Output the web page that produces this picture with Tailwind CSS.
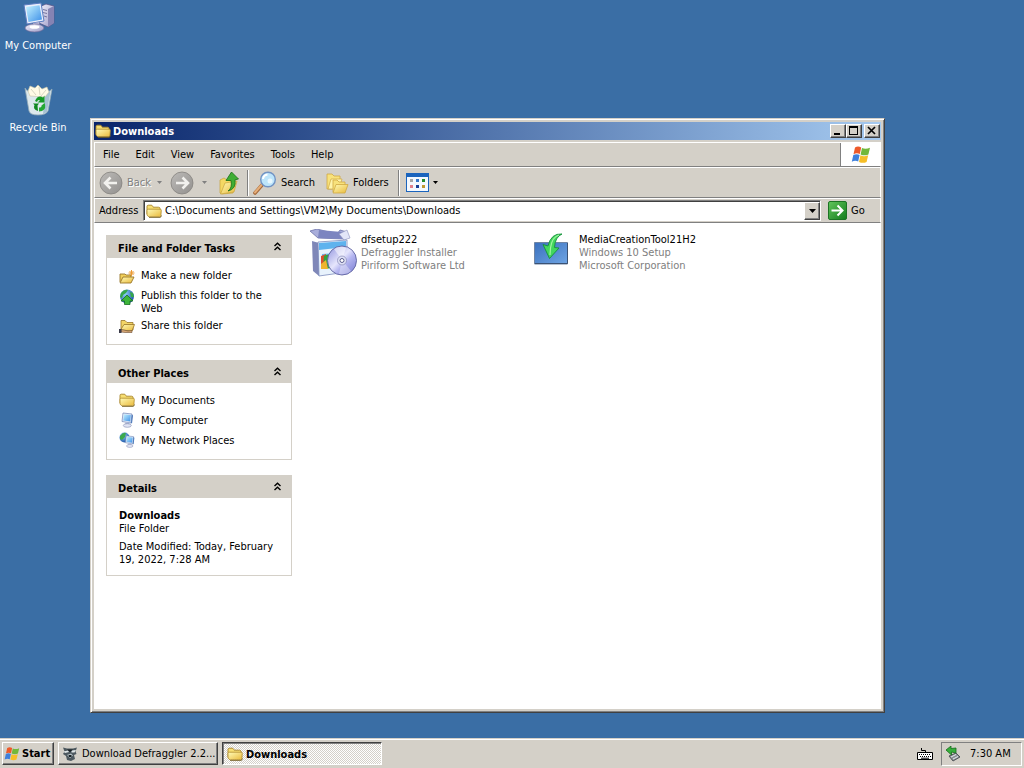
<!DOCTYPE html>
<html lang="en">
<head>
    <meta charset="UTF-8">
    <meta name="viewport" content="width=device-width, initial-scale=1.0">
    <script src="https://cdn.jsdelivr.net/npm/@tailwindcss/browser@4"></script>
    <title>Downloads</title>
</head>
<body class="flex min-h-screen flex-col bg-[#3a6ea5] font-['DejaVu_Sans_Condensed','DejaVu_Sans',sans-serif] text-[11px] leading-[13px] text-black">
    <!-- Shared icons -->
    <svg class="absolute h-0 w-0" aria-hidden="true">
        <defs>
            <linearGradient id="gFolder" x1="0" y1="0" x2="1" y2="1"><stop offset="0" stop-color="#fffbb8"/><stop offset="1" stop-color="#e9b93a"/></linearGradient>
            <linearGradient id="gScreen" x1="0" y1="0" x2="1" y2="1"><stop offset="0" stop-color="#c4f3ff"/><stop offset="1" stop-color="#3c8fe8"/></linearGradient>
            <linearGradient id="gCase" x1="0" y1="0" x2="1" y2="1"><stop offset="0" stop-color="#f4f3fd"/><stop offset="1" stop-color="#9a98c4"/></linearGradient>
            <linearGradient id="gGrey" x1="0" y1="0" x2="1" y2="1"><stop offset="0" stop-color="#bdbbb8"/><stop offset="1" stop-color="#92908e"/></linearGradient>
            <linearGradient id="gGreen" x1="0" y1="0" x2="1" y2="1"><stop offset="0" stop-color="#62c65c"/><stop offset="1" stop-color="#137c1c"/></linearGradient>
            <radialGradient id="gGlobe" cx=".35" cy=".3" r=".8"><stop offset="0" stop-color="#8fd0ff"/><stop offset="1" stop-color="#12489c"/></radialGradient>
            <linearGradient id="gDisc" x1="0" y1="0" x2="1" y2="1"><stop offset="0" stop-color="#8d90dd"/><stop offset=".45" stop-color="#e6e6fc"/><stop offset=".6" stop-color="#b5b6f0"/><stop offset="1" stop-color="#7478cf"/></linearGradient>
            <linearGradient id="gTile" x1="0" y1="0" x2="1" y2="1"><stop offset="0" stop-color="#3a70bd"/><stop offset="1" stop-color="#6fa5e4"/></linearGradient>
        </defs>
        <symbol id="folder" viewBox="0 0 16 16">
            <path d="M1 11V3.500Q1 2.200 2.200 2.200H5.200Q6.200 2.200 6.700 3.200L7.200 4.200H12.500Q14 4.200 14 5.500V12" fill="#f7de72" stroke="#a8842a" stroke-width=".9"/>
            <path d="M1 12V7.500Q1 6.200 2.300 6.200H14.200Q15.400 6.200 15.300 7.400L14.900 12.500Q14.800 13.800 13.500 13.800H3.500Q2 13.800 1 12Z" fill="url(#gFolder)" stroke="#b08c2e" stroke-width=".8"/>
            <path d="M3 14.400H14Q15.300 14.200 15.500 12.500" fill="none" stroke="#6f5a20" stroke-width=".8"/>
        </symbol>
        <symbol id="pc" viewBox="0 0 16 16">
            <path d="M4 1 13 2 12 11 3 9.500Z" fill="#e8ecf8" stroke="#6b83b5" stroke-width=".7"/>
            <path d="M4.900 2.200 11.900 3 11.200 9.600 4.200 8.500Z" fill="url(#gScreen)"/>
            <path d="M12.800 2.500 14 3.500 13 11.500 12 11Z" fill="#4976b8"/>
            <path d="M6.500 10.200 10.500 10.800 10.200 12.500H6Z" fill="#b4bcd8"/>
            <ellipse cx="8.300" cy="13.500" rx="4" ry="1.800" fill="#e2e5f4" stroke="#7f89b0" stroke-width=".6"/>
        </symbol>
        <symbol id="flag" viewBox="0 0 20 18">
            <path d="M4 1.500Q7 -.3 10.200 1.500L8.800 8Q5.700 6.500 2.500 8.200Z" fill="#ee5a2a"/>
            <path d="M11 2Q14.500 3.800 19 1.700L17.400 8.400Q13.500 10.200 9.600 8.400Z" fill="#72b83a"/>
            <path d="M2.300 9.100Q5.500 7.300 8.600 8.900L7.200 15.600Q4.200 14 .8 15.800Z" fill="#3f80dc"/>
            <path d="M9.400 9.300Q13 11 17.200 9.300L15.600 16Q12 17.700 8 16Z" fill="#f6be27"/>
        </symbol>
        <symbol id="chevrons" viewBox="0 0 9 9">
            <path d="M1.500 4 4.500 1.200 7.500 4M1.500 8 4.500 5.200 7.500 8" fill="none" stroke="#000" stroke-width="1.400"/>
        </symbol>
        <symbol id="down" viewBox="0 0 7 4"><path d="M0 0H7L3.500 4Z" fill="currentColor"/></symbol>
    </svg>

    <main class="relative flex-1">
        <!-- Desktop icons -->
        <div class="absolute top-px left-0 w-[76px] text-center text-white">
            <button class="flex h-[82px] w-full flex-col items-center gap-1">
                <svg class="h-[34px] w-[34px]" viewBox="0 0 34 34">
                    <path d="M18 6 25 3 33 5V22L27 26 18 22Z" fill="url(#gCase)" stroke="#57558a" stroke-width=".8"/>
                    <path d="M27 8 33 5V22L27 26Z" fill="#8583b3"/>
                    <path d="M22 8.500 26 9.500M22 11.500 26 12.500M23 15 26 16" stroke="#77759f"/>
                    <path d="M3 4 20 2 23 20 6 23Z" fill="#e9eefb" stroke="#5a7cc0" stroke-width="1"/>
                    <path d="M5 6 18.500 4.300 21 18.500 7.500 21Z" fill="url(#gScreen)"/>
                    <path d="M12 22 18 21 19 26H12Z" fill="#b6b6d8"/>
                    <ellipse cx="13.500" cy="27" rx="9.500" ry="4" fill="url(#gCase)" stroke="#6b6998" stroke-width=".7"/>
                    <ellipse cx="13.500" cy="26" rx="5" ry="1.800" fill="#fff"/>
                </svg>
                <span>My Computer</span>
            </button>
            <button class="flex w-full flex-col items-center gap-1">
                <svg class="h-[34px] w-[34px]" viewBox="0 0 34 34">
                    <path d="M4 5 8 28Q9 32 17 32T27 28L31 6Q28 10 17 10T4 5Z" fill="#dce8ec" stroke="#93abb8" stroke-width=".8"/>
                    <path d="M24 10 29.500 8 26 29 22 31Z" fill="#8fb0c8" opacity=".7"/>
                    <path d="M7 8 9 3 14 5 17 2 21 6 26 4 28 9 24 14 9 13Z" fill="#fffbe6" stroke="#c5c3a8" stroke-width=".6"/>
                    <path d="M10 6 15 12M18 4 19 12M25 7 20 13" stroke="#d8d6c0"/>
                    <path d="M14 18Q17 11.500 22 14.500L23.500 12.500V19.500H16.500L19 17.500Q17 16 16 19Z" fill="#169a26"/>
                    <path d="M23.500 20Q26 25 21 28L18 28.500V24.500Q20.800 24.500 20.500 22.500Z" fill="#24a834"/>
                    <path d="M12 20.500H18L16.500 22.500 17 28Q11.500 26.500 13.500 22Z" fill="#0f8820"/>
                </svg>
                <span>Recycle Bin</span>
            </button>
        </div>

        <!-- Explorer window -->
        <section class="absolute top-[118px] left-[90px] flex h-[595px] w-[795px] flex-col border border-t-[#d4d0c8] border-r-[#404040] border-b-[#404040] border-l-[#d4d0c8] bg-[#d4d0c8] p-[3px] shadow-[inset_1px_1px_0_#fff,inset_-1px_-1px_0_#808080]">
            <header class="flex h-[18px] shrink-0 items-center bg-linear-to-r from-[#0a246a] to-[#a6caf0] pr-px pl-px text-white">
                <svg class="h-4 w-4"><use href="#folder"/></svg>
                <h1 class="ml-[2px] flex-1 font-bold">Downloads</h1>
                <button aria-label="Minimize" class="h-[14px] w-4 border border-t-white border-r-[#404040] border-b-[#404040] border-l-white bg-[#d4d0c8] shadow-[inset_-1px_-1px_0_#808080]"><svg class="h-3 w-[14px]" viewBox="0 0 14 12"><path d="M3 8H9V10H3Z"/></svg></button>
                <button aria-label="Maximize" class="h-[14px] w-4 border border-t-white border-r-[#404040] border-b-[#404040] border-l-white bg-[#d4d0c8] shadow-[inset_-1px_-1px_0_#808080]"><svg class="h-3 w-[14px]" viewBox="0 0 14 12"><path d="M2 1H11V10H2ZM3 3V9H10V3Z" fill-rule="evenodd"/></svg></button>
                <button aria-label="Close" class="ml-[2px] h-[14px] w-4 border border-t-white border-r-[#404040] border-b-[#404040] border-l-white bg-[#d4d0c8] shadow-[inset_-1px_-1px_0_#808080]"><svg class="h-3 w-[14px]" viewBox="0 0 14 12"><path d="M3 2 10 9M10 2 3 9" stroke="#000" stroke-width="1.700"/></svg></button>
            </header>

            <nav class="mt-[2px] flex h-[25px] shrink-0 items-stretch border border-t-white border-r-white border-b-[#808080] border-l-white">
                <button class="px-2">File</button>
                <button class="px-2">Edit</button>
                <button class="px-2">View</button>
                <button class="px-2">Favorites</button>
                <button class="px-2">Tools</button>
                <button class="px-2">Help</button>
                <span class="ml-auto flex w-10 items-center justify-center border-l border-[#808080] bg-white">
                    <svg class="h-[18px] w-5"><use href="#flag"/></svg>
                </span>
            </nav>

            <div class="flex h-[31px] shrink-0 items-center border border-t-white border-r-white border-b-[#808080] border-l-white pl-1">
                <button disabled class="flex w-[71px] items-center gap-1 text-[#808080]">
                    <svg class="h-6 w-6" viewBox="0 0 24 24"><circle cx="12" cy="12" r="11" fill="url(#gGrey)" stroke="#85837f" stroke-width=".8"/><path d="M18 12H7M11.500 6.500 6 12 11.500 17.500" fill="none" stroke="#f2f1ee" stroke-width="2.600"/></svg>
                    <span class="[text-shadow:1px_1px_0_#fff]">Back</span>
                    <svg class="ml-[2px] h-[3px] w-[5px]" viewBox="0 0 7 4"><use href="#down"/></svg>
                </button>
                <button disabled aria-label="Forward" class="flex w-[48px] items-center gap-2 text-[#808080]">
                    <svg class="h-6 w-6" viewBox="0 0 24 24"><circle cx="12" cy="12" r="11" fill="url(#gGrey)" stroke="#85837f" stroke-width=".8"/><path d="M6 12H17M12.500 6.500 18 12 12.500 17.500" fill="none" stroke="#f2f1ee" stroke-width="2.600"/></svg>
                    <svg class="h-[3px] w-[5px]" viewBox="0 0 7 4"><use href="#down"/></svg>
                </button>
                <button aria-label="Up" class="w-[29px]">
                    <svg class="h-6 w-6" viewBox="0 0 24 24">
                        <path d="M2 22V9L6 7 9 9 15 8V22L4 23Z" fill="#f4d863" stroke="#c7a43e" stroke-width=".7"/>
                        <path d="M2.500 23 7 12 19 10 16 21Z" fill="url(#gFolder)" stroke="#c7a43e" stroke-width=".7"/>
                        <path d="M10 20Q14.500 17 13 9.500L8 9.500 13.500 1 20.500 8 17 8.800Q18.500 18 10 20Z" fill="#3fae35" stroke="#186e16" stroke-width=".8"/>
                    </svg>
                </button>
                <span class="h-[26px] w-[2px] border-l border-[#808080] bg-white"></span>
                <button class="ml-1 flex w-[72px] items-center gap-1">
                    <svg class="h-6 w-6" viewBox="0 0 24 24">
                        <path d="M9 14 2 22" stroke="#a5693c" stroke-width="3.600" stroke-linecap="round"/>
                        <path d="M8.500 14 2 21.500" stroke="#e6ae78" stroke-width="2" stroke-linecap="round"/>
                        <circle cx="15" cy="8.500" r="7.300" fill="#bde5fb" stroke="#7193c4" stroke-width="1.400"/>
                        <path d="M10 8Q10.500 4 14.500 3.500" fill="none" stroke="#fff" stroke-width="2"/>
                        <circle cx="17" cy="10" r="2.500" fill="#e8f8ff"/>
                    </svg>
                    <span>Search</span>
                </button>
                <button class="flex w-[73px] items-center gap-1">
                    <svg class="h-6 w-6" viewBox="0 0 24 24">
                        <path d="M2 18V3H7L9 5H15V8L7 18Z" fill="#f8e27c" stroke="#cfa843" stroke-width=".8"/>
                        <path d="M3 18 6 8H17L14 18Z" fill="#fff4ac" stroke="#cfa843" stroke-width=".7"/>
                        <path d="M8 21V9H12L14 11H20V14" fill="#f8e27c" stroke="#cfa843" stroke-width=".8"/>
                        <path d="M8 22 11 13.500H23L20 22Z" fill="url(#gFolder)" stroke="#cfa843" stroke-width=".8"/>
                    </svg>
                    <span>Folders</span>
                </button>
                <span class="h-[26px] w-[2px] border-l border-[#808080] bg-white"></span>
                <button aria-label="Views" class="ml-[6px] flex items-center gap-[3px]">
                    <svg class="h-5 w-6" viewBox="0 0 24 20">
                        <rect x=".5" y=".5" width="22" height="18" fill="#f4f9ff" stroke="#1b64bd"/>
                        <path d="M0 0H23V4H0Z" fill="#1b64bd"/>
                        <path d="M4 6H7V9H4Z" fill="#a6a6a6"/><path d="M10 6H13V9H10Z" fill="#3577c9"/><path d="M16 6H19V9H16Z" fill="#258c2d"/>
                        <path d="M4 12H7V15H4Z" fill="#e3808b"/><path d="M10 12H13V15H10Z" fill="#173d94"/><path d="M16 12H19V15H16Z" fill="#bf9832"/>
                    </svg>
                    <svg class="h-[3px] w-[5px]" viewBox="0 0 7 4"><use href="#down"/></svg>
                </button>
            </div>

            <form class="flex h-[25px] shrink-0 items-center border border-t-white border-r-white border-b-[#808080] border-l-white pl-1">
                <label for="address" class="w-[44px]">Address</label>
                <div class="flex h-[21px] min-w-0 flex-1 items-center border border-t-[#808080] border-r-white border-b-white border-l-[#808080] bg-white pl-px shadow-[inset_1px_1px_0_#404040]">
                    <svg class="ml-px h-4 w-4 shrink-0"><use href="#folder"/></svg>
                    <input id="address" type="text" value="C:\Documents and Settings\VM2\My Documents\Downloads" class="ml-[3px] min-w-0 flex-1 outline-none">
                    <button type="button" aria-label="Show addresses" class="flex h-[18px] w-4 items-center justify-center border border-t-white border-r-[#404040] border-b-[#404040] border-l-white bg-[#d4d0c8] shadow-[inset_-1px_-1px_0_#808080]"><svg class="h-1 w-[7px]"><use href="#down"/></svg></button>
                </div>
                <button type="button" class="ml-[7px] flex w-[52px] items-center gap-1">
                    <svg class="h-[19px] w-[19px]" viewBox="0 0 19 19"><rect x=".5" y=".5" width="18" height="18" rx="1.500" fill="url(#gGreen)" stroke="#1c7424"/><path d="M3.500 9.500H14M9.500 4.500 14.500 9.500 9.500 14.500" fill="none" stroke="#fff" stroke-width="2"/></svg>
                    <span>Go</span>
                </button>
            </form>

            <div class="flex min-h-0 flex-1 bg-white">
                <aside class="flex w-[210px] shrink-0 flex-col gap-[15px] pt-3 pr-3 pl-3">
                    <section class="h-[110px] border border-[#d4d0c8]">
                        <h2 class="flex h-[22px] items-center justify-between bg-[#d4d0c8] pt-[2px] pr-[9px] pl-[11px] font-bold">File and Folder Tasks <svg class="mb-1 h-[9px] w-[9px]"><use href="#chevrons"/></svg></h2>
                        <ul class="flex flex-col gap-[7px] pt-[11px] pr-4 pl-3">
                            <li><a href="#" class="flex gap-[6px]">
                                <svg class="-mb-1 h-4 w-4 shrink-0" viewBox="0 0 16 16"><path d="M1 13V5H6L7 6H12V9" fill="#f1cf59" stroke="#99762a" stroke-width=".9"/><path d="M1 14 4 8H15L12 14Z" fill="url(#gFolder)" stroke="#99762a" stroke-width=".9"/><path d="M12.500 1V7M9.500 4H15.500M10.500 2 14.500 6M14.500 2 10.500 6" stroke="#ec9b35"/></svg>
                                Make a new folder</a></li>
                            <li><a href="#" class="flex gap-[6px]">
                                <svg class="h-4 w-4 shrink-0" viewBox="0 0 16 16"><circle cx="8" cy="7.500" r="7" fill="url(#gGlobe)"/><path d="M2 4Q5 0 9 1L7 4 4 6 3 9 1 8ZM11 3 14 4 15 8 12 8Z" fill="#37a84a"/><path d="M8 6 14 12H11V15.500H5.500V12H2Z" fill="#3db53a" stroke="#176e22" stroke-width=".8"/></svg>
                                Publish this folder to the Web</a></li>
                            <li class="-mt-[3px]"><a href="#" class="flex gap-[6px]">
                                <svg class="h-4 w-4 shrink-0" viewBox="0 0 16 16"><path d="M2 11V1.500H6L8 3.500H14V11Z" fill="#f3d566" stroke="#99762a" stroke-width=".8"/><path d="M1.500 11 5 5.500H15.500L13 12Z" fill="url(#gFolder)" stroke="#99762a" stroke-width=".8"/><path d="M2 10.500 5 11 9 12 13 11.500V13.500H6L2 13Z" fill="#d9a877" stroke="#6b4f35" stroke-width=".6"/><path d="M0 10H2.500V14H0Z" fill="#3b3b49"/></svg>
                                Share this folder</a></li>
                        </ul>
                    </section>

                    <section class="h-[100px] border border-[#d4d0c8]">
                        <h2 class="flex h-[22px] items-center justify-between bg-[#d4d0c8] pt-[2px] pr-[9px] pl-[11px] font-bold">Other Places <svg class="mb-1 h-[9px] w-[9px]"><use href="#chevrons"/></svg></h2>
                        <ul class="flex flex-col gap-1 pt-[9px] pl-3">
                            <li><a href="#" class="flex items-center gap-[6px]"><svg class="h-4 w-4"><use href="#folder"/></svg> My Documents</a></li>
                            <li><a href="#" class="flex items-center gap-[6px]"><svg class="h-4 w-4"><use href="#pc"/></svg> My Computer</a></li>
                            <li><a href="#" class="flex items-center gap-[6px]">
                                <svg class="h-4 w-4" viewBox="0 0 16 16"><circle cx="5.500" cy="5.500" r="5" fill="url(#gGlobe)"/><path d="M1 4Q4 0 7 1L6 5 3 8 1 7Z" fill="#3caa4d"/><use href="#pc" x="4" y="3" width="13" height="13"/></svg>
                                My Network Places</a></li>
                        </ul>
                    </section>

                    <section class="h-[101px] border border-[#d4d0c8]">
                        <h2 class="flex h-[22px] items-center justify-between bg-[#d4d0c8] pt-[2px] pr-[9px] pl-[11px] font-bold">Details <svg class="mb-1 h-[9px] w-[9px]"><use href="#chevrons"/></svg></h2>
                        <div class="pt-[11px] pr-3 pl-3">
                            <p class="font-bold">Downloads</p>
                            <p>File Folder</p>
                            <p class="mt-[5px]">Date Modified: Today, February 19, 2022, 7:28 AM</p>
                        </div>
                    </section>
                </aside>

                <ul class="flex flex-1 flex-wrap content-start pt-[6px] pl-[5px]">
                    <li class="flex w-[218px] gap-1">
                        <svg class="h-12 w-12 shrink-0" viewBox="0 0 48 48">
                            <path d="M1 2 9 9 35 10 38 3 31 1 28 5 8 0Z" fill="#a9aedb" stroke="#6c72a8" stroke-width=".8"/>
                            <path d="M9 9 10 1 33 3 35 10Z" fill="#7c85c0"/>
                            <path d="M30 5 38 1 41 9 35 11Z" fill="#e3e6f8" stroke="#8b90bc" stroke-width=".6"/>
                            <path d="M3 12 10 14V47L4 42Z" fill="#7f87b8"/>
                            <path d="M9 13 38 11V43L10 47Z" fill="#e8f2fc" stroke="#7c8cbd" stroke-width=".8"/>
                            <path d="M10 14 37 12V18L10 21Z" fill="#5fb3ee"/>
                            <path d="M13 25 26 24V31L13 32Z" fill="#6dbcf0"/>
                            <path d="M12 27 17 25V38L12 39Z" fill="#d8502f"/>
                            <path d="M15 27Q19 24 24 27V39L14 40Z" fill="#31a53d"/>
                            <path d="M12 35 17 31 19 40H12Z" fill="#efb32e"/>
                            <circle cx="33" cy="31.500" r="14.500" fill="url(#gDisc)" stroke="#5f639f" stroke-width=".9"/>
                            <path d="M33 31 25 20Q31 16 37 19Z" fill="#fff" opacity=".5"/>
                            <path d="M33 31 42 42Q37 46 30 45Z" fill="#fff" opacity=".35"/>
                            <circle cx="33" cy="31.500" r="4.500" fill="#dfe1f5" stroke="#8487b6" stroke-width=".7"/>
                            <circle cx="33" cy="31.500" r="2" fill="#fff" stroke="#5d6090"/>
                        </svg>
                        <div class="pt-1 text-[#808080]"><p class="text-black">dfsetup222</p><p>Defraggler Installer</p><p>Piriform Software Ltd</p></div>
                    </li>
                    <li class="flex w-[218px] gap-1">
                        <svg class="h-12 w-12 shrink-0" viewBox="0 0 48 48">
                            <path d="M7.500 13.500H40.500V35H7.500Z" fill="url(#gTile)" stroke="#6f84a3"/>
                            <path d="M8 34.500H40.500V14" fill="none" stroke="#3b5273"/>
                            <path d="M35 5Q24 4 21 17L16 15.500 22.500 29.500 32 19 27.500 18.500Q28 8 35 5Z" fill="#43d65e" stroke="#14913b" stroke-width=".9"/>
                            <path d="M32 6Q25 8 23.500 19L23 26" fill="none" stroke="#a2f5a0" stroke-width="1.200"/>
                        </svg>
                        <div class="pt-1 text-[#808080]"><p class="text-black">MediaCreationTool21H2</p><p>Windows 10 Setup</p><p>Microsoft Corporation</p></div>
                    </li>
                </ul>
            </div>
        </section>
    </main>

    <!-- Taskbar -->
    <footer class="flex h-[30px] items-center gap-1 border-t border-[#d4d0c8] bg-[#d4d0c8] pr-[2px] pl-[2px] shadow-[inset_0_1px_0_#fff]">
        <button class="flex h-[23px] w-[52px] items-center gap-[2px] border border-t-white border-r-[#404040] border-b-[#404040] border-l-white pl-px font-bold shadow-[inset_-1px_-1px_0_#808080]">
            <svg class="h-4 w-4 shrink-0" viewBox="0 0 20 18"><use href="#flag"/></svg> Start
        </button>
        <button class="flex h-[23px] w-40 items-center gap-1 border border-t-white border-r-[#404040] border-b-[#404040] border-l-white pl-[3px] whitespace-nowrap shadow-[inset_-1px_-1px_0_#808080]">
            <svg class="h-4 w-4 shrink-0" viewBox="0 0 16 16"><path d="M1 1.500 5 2.500H11L15 1.500 13.500 5.500 14.500 8 12 9 13 13 9 15 5 14 4 10 1 8 2.500 5.500Z" fill="#4d585f"/><path d="M1.500 5.500 6 4.500 7 6 3 7ZM9.500 4.500 14 4 12.500 6.500H9.500Z" fill="#dfe6e8"/><path d="M5 9 9 7.500 11 9.500 8 12Z" fill="#b9c4c8"/><path d="M6.500 9H9.500V11H7ZM5 3.500H11L8 6Z" fill="#182024"/></svg>
            Download Defraggler 2.2...
        </button>
        <button aria-pressed="true" class="flex h-[23px] w-40 items-center gap-[3px] border border-t-[#404040] border-r-white border-b-white border-l-[#404040] bg-[repeating-conic-gradient(#fff_0_25%,#d4d0c8_0_50%)] bg-[length:2px_2px] pt-px pl-1 font-bold shadow-[inset_1px_1px_0_#808080]">
            <svg class="h-4 w-4 shrink-0"><use href="#folder"/></svg> Downloads
        </button>
        <svg class="ml-auto h-4 w-4" viewBox="0 0 16 16"><path d="M8.500 6V4.500H4.500V2" fill="none" stroke="#000"/><path d="M.5 6.500H15.500V13.500H.5Z" fill="#fff" stroke="#000"/><path d="M2 8.500H14M3 10.500H14" stroke="#000" stroke-dasharray="1 1"/><path d="M4 12.200H12" stroke="#000"/></svg>
        <div class="ml-1 flex h-[24px] w-[81px] items-center gap-[9px] border border-t-[#808080] border-r-white border-b-white border-l-[#808080] pl-[3px]">
            <svg class="h-4 w-4" viewBox="0 0 16 16"><path d="M4 10 11 7 15 11 8 15Z" fill="#8d9196" stroke="#3c4146" stroke-width=".8"/><path d="M6 11 11 8.500M8 13 13 10.500" stroke="#e8ebee"/><path d="M1 4 6 0V2.500L11 2V7L6.500 6V9Z" fill="#37ae3b" stroke="#176d1d" stroke-width=".8"/></svg>
            <time>7:30 AM</time>
        </div>
    </footer>
</body>
</html>
